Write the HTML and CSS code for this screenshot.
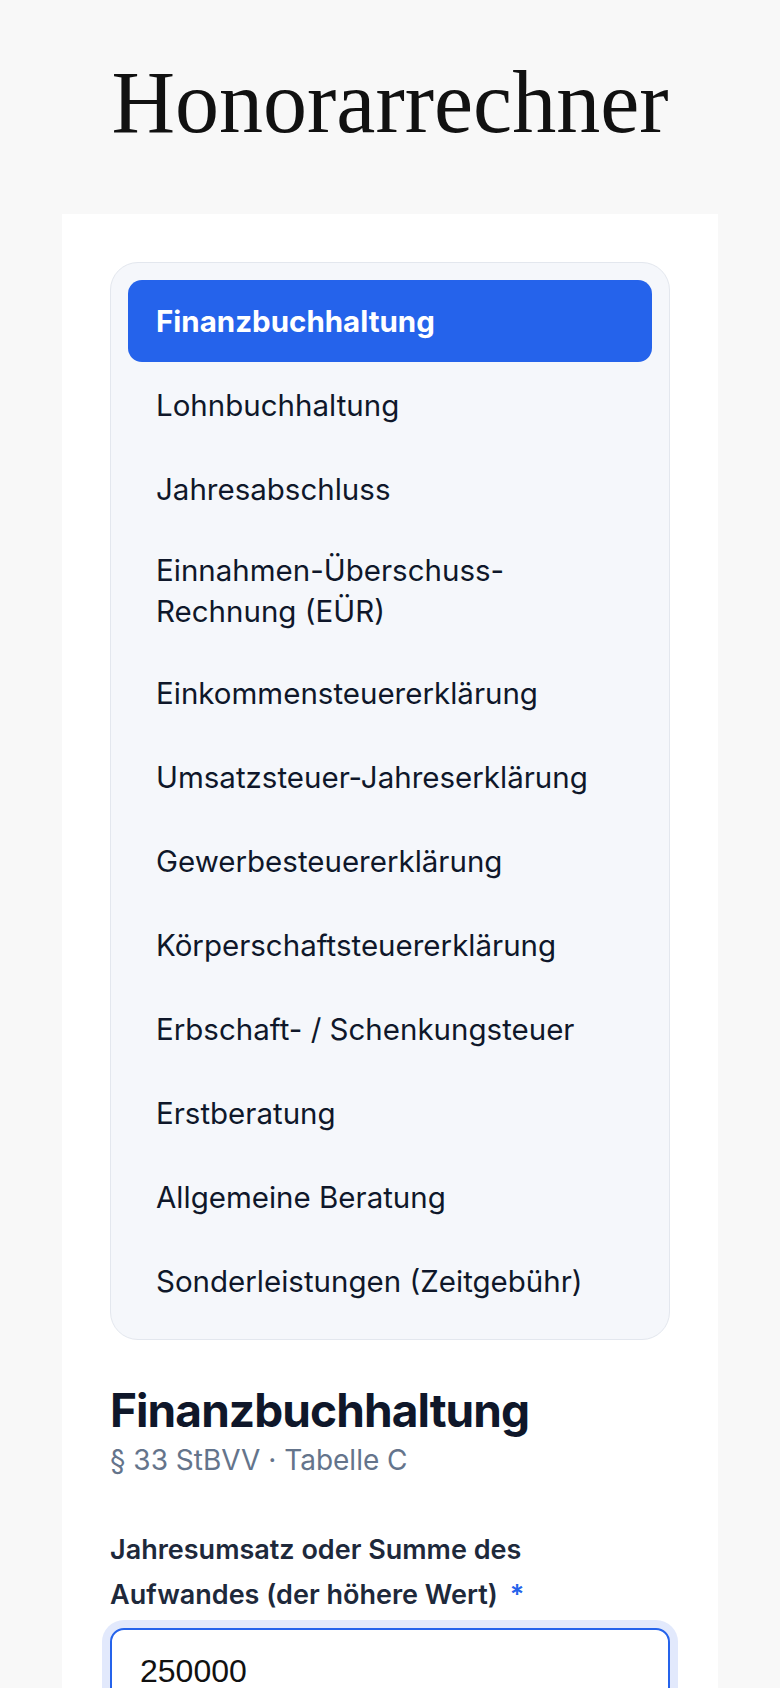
FILE: index.html
```html
<!DOCTYPE html>
<html lang="de">
<head>
<meta charset="utf-8">
<title>Honorarrechner</title>
<link rel="stylesheet" href="styles.css">
</head>
<body>
<header class="page-head">
  <h1 class="title">Honorarrechner</h1>
</header>
<main class="card">
  <nav class="tabs">
    <button class="tab is-active" type="button">Finanzbuchhaltung</button>
    <button class="tab" type="button">Lohnbuchhaltung</button>
    <button class="tab" type="button">Jahresabschluss</button>
    <button class="tab" type="button">Einnahmen-Überschuss-Rechnung (EÜR)</button>
    <button class="tab" type="button">Einkommensteuererklärung</button>
    <button class="tab" type="button">Umsatzsteuer-Jahreserklärung</button>
    <button class="tab" type="button">Gewerbesteuererklärung</button>
    <button class="tab" type="button">Körperschaftsteuererklärung</button>
    <button class="tab" type="button">Erbschaft- / Schenkungsteuer</button>
    <button class="tab" type="button">Erstberatung</button>
    <button class="tab" type="button">Allgemeine Beratung</button>
    <button class="tab" type="button">Sonderleistungen (Zeitgebühr)</button>
  </nav>
  <section class="calc">
    <h2 class="calc-title">Finanzbuchhaltung</h2>
    <p class="calc-sub">§ 33 StBVV · Tabelle C</p>
    <div class="field">
      <label class="field-label" for="umsatz">Jahresumsatz oder Summe des Aufwandes (der höhere Wert)<span class="req">*</span></label>
      <input class="field-input" id="umsatz" type="text" value="250000">
    </div>
  </section>
</main>
</body>
</html>
```
FILE: styles.css
```css
* { box-sizing: border-box; }
body {
  margin: 0;
  background: #f8f8f8;
  font-family: Inter, "Noto Sans", sans-serif;
  color: #0f172a;
}
.page-head {
  padding: 59px 0 67px;
  text-align: center;
}
.title {
  margin: 0;
  font-family: "Liberation Serif", serif;
  font-weight: 400;
  font-size: 88px;
  line-height: 88px;
  color: #111111;
}
.card {
  margin: 0 62px;
  background: #ffffff;
  padding: 48px 48px 120px;
}
.tabs {
  display: flex;
  flex-direction: column;
  gap: 2px;
  padding: 17px;
  border: 1px solid #e3e7ee;
  border-radius: 28px;
  background: #f5f7fb;
}
.tab {
  display: flex;
  align-items: center;
  min-height: 82px;
  padding: 18px 40px 18px 28px;
  border: 0;
  border-radius: 14px;
  background: transparent;
  font-family: Inter, "Noto Sans", sans-serif;
  font-size: 29.5px;
  line-height: 41px;
  font-weight: 400;
  color: #0f172a;
  text-align: left;
}
.tab.is-active {
  background: #2563eb;
  color: #ffffff;
  font-weight: 700;
}
.calc { padding-top: 42px; }
.calc-title {
  margin: 0;
  font-size: 46px;
  line-height: 1.25;
  font-weight: 700;
  letter-spacing: -0.02em;
  color: #0f172a;
}
.calc-sub {
  margin: 0;
  font-size: 28px;
  line-height: 40px;
  color: #64748b;
}
.field { margin-top: 47px; }
.field-label {
  display: block;
  margin-bottom: 11px;
  font-size: 27px;
  line-height: 45px;
  font-weight: 600;
  color: #1e293b;
}
.req {
  margin-left: 12px;
  color: #2563eb;
}
.field-input {
  display: block;
  width: 100%;
  padding: 23px 28px;
  border: 2px solid #2563eb;
  border-radius: 14px;
  box-shadow: 0 0 0 8px #e2e9fc;
  outline: none;
  font-family: "Liberation Sans", Arial, sans-serif;
  font-size: 32px;
  line-height: normal;
  color: #111111;
  background: #ffffff;
}
```
